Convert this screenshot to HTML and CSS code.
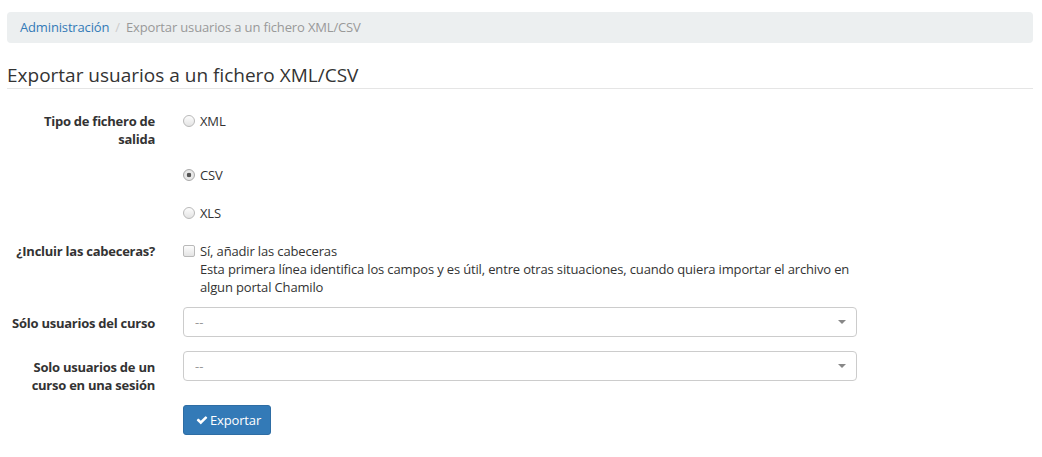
FILE: index.html
```html
<!DOCTYPE html>
<html lang="es">
<head>
<meta charset="utf-8">
<title>Exportar usuarios a un fichero XML/CSV</title>
<link rel="stylesheet" href="styles.css">
</head>
<body>
<div class="page">
  <nav class="breadcrumb">
    <a href="#" class="crumb-link">Administración</a><span class="crumb-sep">/</span><span class="crumb-active">Exportar usuarios a un fichero XML/CSV</span>
  </nav>
  <h3 class="legend">Exportar usuarios a un fichero XML/CSV</h3>
  <form class="form">
    <div class="row">
      <label class="row-label">Tipo de fichero de<br>salida</label>
      <div class="control">
        <label class="choice"><input type="radio" name="file_type" class="radio" value="xml"><span>XML</span></label>
      </div>
    </div>
    <div class="row">
      <div class="row-label"></div>
      <div class="control">
        <label class="choice"><input type="radio" name="file_type" class="radio" value="csv" checked><span>CSV</span></label>
      </div>
    </div>
    <div class="row">
      <div class="row-label"></div>
      <div class="control">
        <label class="choice"><input type="radio" name="file_type" class="radio" value="xls"><span>XLS</span></label>
      </div>
    </div>
    <div class="row">
      <label class="row-label">¿Incluir las cabeceras?</label>
      <div class="control">
        <label class="choice choice-top"><input type="checkbox" class="checkbox"><span class="choice-text">Sí, añadir las cabeceras<br>Esta primera línea identifica los campos y es útil, entre otras situaciones, cuando quiera importar el archivo en<br>algun portal Chamilo</span></label>
      </div>
    </div>
    <div class="row row-select">
      <label class="row-label">Sólo usuarios del curso</label>
      <div class="control control-select">
        <div class="select-wrap"><select class="select"><option>--</option></select></div>
      </div>
    </div>
    <div class="row row-select">
      <label class="row-label">Solo usuarios de un<br>curso en una sesión</label>
      <div class="control control-select">
        <div class="select-wrap"><select class="select"><option>--</option></select></div>
      </div>
    </div>
    <div class="row">
      <div class="row-label"></div>
      <div class="control control-select">
        <button type="button" class="btn-primary"><svg class="icon-check" width="12" height="12" viewBox="0 0 1792 1792"><path fill="#fff" d="M1671 566q0 40-28 68l-724 724-136 136q-28 28-68 28t-68-28l-136-136-362-362q-28-28-28-68t28-68l136-136q28-28 68-28t68 28l294 295 656-657q28-28 68-28t68 28l136 136q28 28 28 68z"/></svg>Exportar</button>
      </div>
    </div>
  </form>
</div>
</body>
</html>
```

FILE: styles.css
```css
* { box-sizing: border-box; }

body {
  margin: 0;
  font-family: "Open Sans", "Liberation Sans", sans-serif;
  font-size: 13px;
  line-height: 18px;
  letter-spacing: -0.15px;
  color: #333;
  background: #fff;
}

.page {
  padding: 12px 9px 0 7px;
}

.breadcrumb {
  background: #eceff0;
  border-radius: 4px;
  padding: 6px 13px;
  line-height: 19px;
}

.crumb-link {
  color: #337ab7;
  text-decoration: none;
}

.crumb-sep {
  color: #ccc;
  padding: 0 6px;
}

.crumb-active {
  color: #999;
}

.legend {
  margin: 21px 0 16px;
  font-size: 19px;
  font-weight: 400;
  line-height: 22px;
  letter-spacing: 0;
  padding-bottom: 2px;
  border-bottom: 1px solid #e5e5e5;
  color: #333;
}

.form {
  margin: 0;
}

.row {
  display: flex;
  min-height: 27px;
  margin-bottom: 11px;
}

.row-select {
  min-height: 33px;
}

.row-label {
  flex: none;
  width: 148px;
  padding-top: 7px;
  text-align: right;
  font-weight: 700;
  letter-spacing: -0.25px;
  white-space: nowrap;
}

.control {
  flex: none;
  width: 674px;
  margin-left: 28px;
  padding-top: 7px;
}

.control-select {
  padding-top: 0;
}

.choice {
  display: flex;
  align-items: center;
}

.choice-top {
  align-items: flex-start;
}

.choice-text {
  white-space: nowrap;
}

.radio {
  appearance: none;
  -webkit-appearance: none;
  flex: none;
  width: 12px;
  height: 12px;
  margin: 0 5px 0 0;
  border-radius: 50%;
  border: 1px solid #b9b9b9;
  background: linear-gradient(#fdfdfd, #e4e4e4);
}

.radio:checked {
  background: radial-gradient(circle, #555 0, #555 2px, #ececec 2.6px, #dcdcdc 100%);
  border-color: #aaa;
}

.checkbox {
  appearance: none;
  -webkit-appearance: none;
  flex: none;
  width: 12px;
  height: 12px;
  margin: 3px 5px 0 0;
  border-radius: 2px;
  border: 1px solid #b9b9b9;
  background: linear-gradient(#fdfdfd, #e4e4e4);
}

.select-wrap {
  position: relative;
}

.select-wrap::after {
  content: "";
  position: absolute;
  right: 11px;
  top: 13px;
  border-top: 4px solid #888;
  border-left: 4px solid transparent;
  border-right: 4px solid transparent;
  pointer-events: none;
}

.select {
  appearance: none;
  -webkit-appearance: none;
  display: block;
  width: 100%;
  height: 30px;
  margin: 0;
  padding: 0 11px;
  border: 1px solid #ccc;
  border-radius: 4px;
  background: #fff;
  font-family: inherit;
  font-size: 13px;
  color: #999;
}

.btn-primary {
  display: inline-flex;
  align-items: center;
  height: 30px;
  padding: 0 9px 0 12px;
  border: 1px solid #2e6da4;
  border-radius: 3px;
  background: #337ab7;
  color: #fff;
  font-family: inherit;
  font-size: 13px;
  line-height: 18px;
  letter-spacing: -0.15px;
  cursor: pointer;
}

.icon-check {
  margin-right: 2px;
}
```
